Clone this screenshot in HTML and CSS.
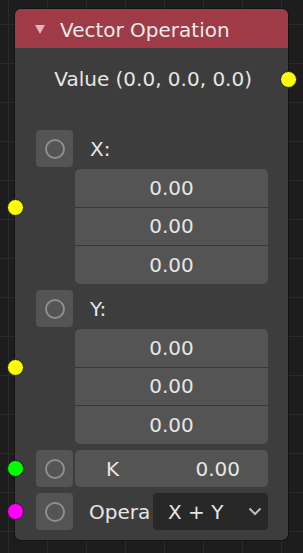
FILE: index.html
```html
<!DOCTYPE html>
<html lang="en">
<head>
    <meta charset="UTF-8">
    <meta name="viewport" content="width=device-width, initial-scale=1.0">
    <title>Vector Operation</title>
    <link rel="stylesheet" href="styles.css">
</head>
<body>

    <div class="node">
        <div class="node-header">
            <svg class="collapse-arrow" width="10" height="9" viewBox="0 0 10 9">
                <polygon points="0,0 10,0 5,9"/>
            </svg>
            <span class="node-title">Vector Operation</span>
        </div>

        <div class="node-body">
            <div class="row output-row">
                <span class="output-label">Value (0.0, 0.0, 0.0)</span>
                <span class="socket socket-out socket-vector"></span>
            </div>

            <!-- X input -->
            <div class="input-block">
                <span class="socket socket-in socket-vector"></span>
                <div class="row">
                    <span class="toggle"><span class="toggle-ring"></span></span>
                    <span class="input-label">X:</span>
                </div>
                <div class="vector-fields">
                    <div class="field">0.00</div>
                    <div class="field">0.00</div>
                    <div class="field">0.00</div>
                </div>
            </div>

            <!-- Y input -->
            <div class="input-block">
                <span class="socket socket-in socket-vector"></span>
                <div class="row">
                    <span class="toggle"><span class="toggle-ring"></span></span>
                    <span class="input-label">Y:</span>
                </div>
                <div class="vector-fields">
                    <div class="field">0.00</div>
                    <div class="field">0.00</div>
                    <div class="field">0.00</div>
                </div>
            </div>

            <!-- K input -->
            <div class="input-block row">
                <span class="socket socket-in socket-value"></span>
                <span class="toggle"><span class="toggle-ring"></span></span>
                <div class="slider-field">
                    <span>K</span>
                    <span>0.00</span>
                </div>
            </div>

            <!-- Operation -->
            <div class="input-block row">
                <span class="socket socket-in socket-shader"></span>
                <span class="toggle"><span class="toggle-ring"></span></span>
                <span class="op-label">Opera</span>
                <div class="dropdown">
                    <span>X + Y</span>
                    <svg class="chevron" width="14" height="9" viewBox="0 0 14 9">
                        <polyline points="1.5,1.5 7,7 12.5,1.5"/>
                    </svg>
                </div>
            </div>
        </div>
    </div>

</body>
</html>
```

FILE: styles.css
```css
* {
    box-sizing: border-box;
    margin: 0;
    padding: 0;
}

html,
body {
    height: 100%;
}

body {
    font-family: 'DejaVu Sans', 'Liberation Sans', sans-serif;
    font-size: 20px;
    color: #e6e6e6;
    background-color: #1d1d1d;
    background-image:
        linear-gradient(to right, #2a2a2a 1px, transparent 1px),
        linear-gradient(to bottom, #2a2a2a 1px, transparent 1px);
    background-size: 39px 39px;
    background-position: 8px 24px;
    padding: 9px 0 0 15px;
    overflow: hidden;
}

.node {
    width: 273px;
    background-color: #3d3d3d;
    border-radius: 6px;
    box-shadow: 0 0 0 1px rgba(0, 0, 0, 0.35);
}

.node-header {
    height: 39px;
    display: flex;
    align-items: center;
    padding-left: 20px;
    background-color: #9f3a47;
    border-radius: 6px 6px 0 0;
}

.collapse-arrow {
    fill: #e2b3ba;
    margin-right: 15px;
    margin-top: 1px;
}

.node-title {
    color: #ececec;
    margin-top: 2px;
}

.node-body {
    padding: 12px 20px 10px 21px;
}

.row {
    display: flex;
    align-items: center;
    height: 37px;
}

.output-row {
    position: relative;
    height: 38px;
    justify-content: flex-end;
    padding-right: 16px;
}

.input-block {
    position: relative;
    margin-top: 6px;
}

.output-row + .input-block {
    margin-top: 32px;
}

/* sockets sit on the node border */
.socket {
    position: absolute;
    top: 50%;
    width: 17px;
    height: 17px;
    margin-top: -8.5px;
    border-radius: 50%;
    border: 1px solid #1e1e1e;
}

.socket-in {
    left: -29.5px;
}

.socket-out {
    right: -28.5px;
}

.socket-vector {
    background-color: #ffff00;
}

.socket-value {
    background-color: #00ff00;
}

.socket-shader {
    background-color: #ff00ff;
}

.toggle {
    width: 37px;
    height: 37px;
    flex-shrink: 0;
    display: flex;
    align-items: center;
    justify-content: center;
    background-color: #545454;
    border-radius: 4px;
}

.toggle-ring {
    width: 20px;
    height: 20px;
    border: 2px solid #8e8e8e;
    border-radius: 50%;
}

.input-label {
    margin-left: 17px;
}

.vector-fields {
    display: grid;
    grid-template-rows: 1fr 1fr 1fr;
    gap: 1px;
    height: 115px;
    margin: 2px 0 0 39px;
    background-color: #383838;
    border-radius: 5px;
    overflow: hidden;
}

.field {
    display: flex;
    align-items: center;
    justify-content: center;
    background-color: #545454;
}

.slider-field {
    flex: 1;
    height: 37px;
    margin-left: 2px;
    display: flex;
    align-items: center;
    justify-content: space-between;
    padding: 0 28px 0 31px;
    background-color: #545454;
    border-radius: 5px;
}

.op-label {
    width: 80px;
    padding-left: 16px;
    overflow: hidden;
    white-space: nowrap;
}

.dropdown {
    flex: 1;
    height: 37px;
    display: flex;
    align-items: center;
    justify-content: space-between;
    padding: 0 6px 0 15px;
    background-color: #282828;
    border-radius: 4px;
}

.chevron {
    fill: none;
    stroke: #bdbdbd;
    stroke-width: 2;
}
```
